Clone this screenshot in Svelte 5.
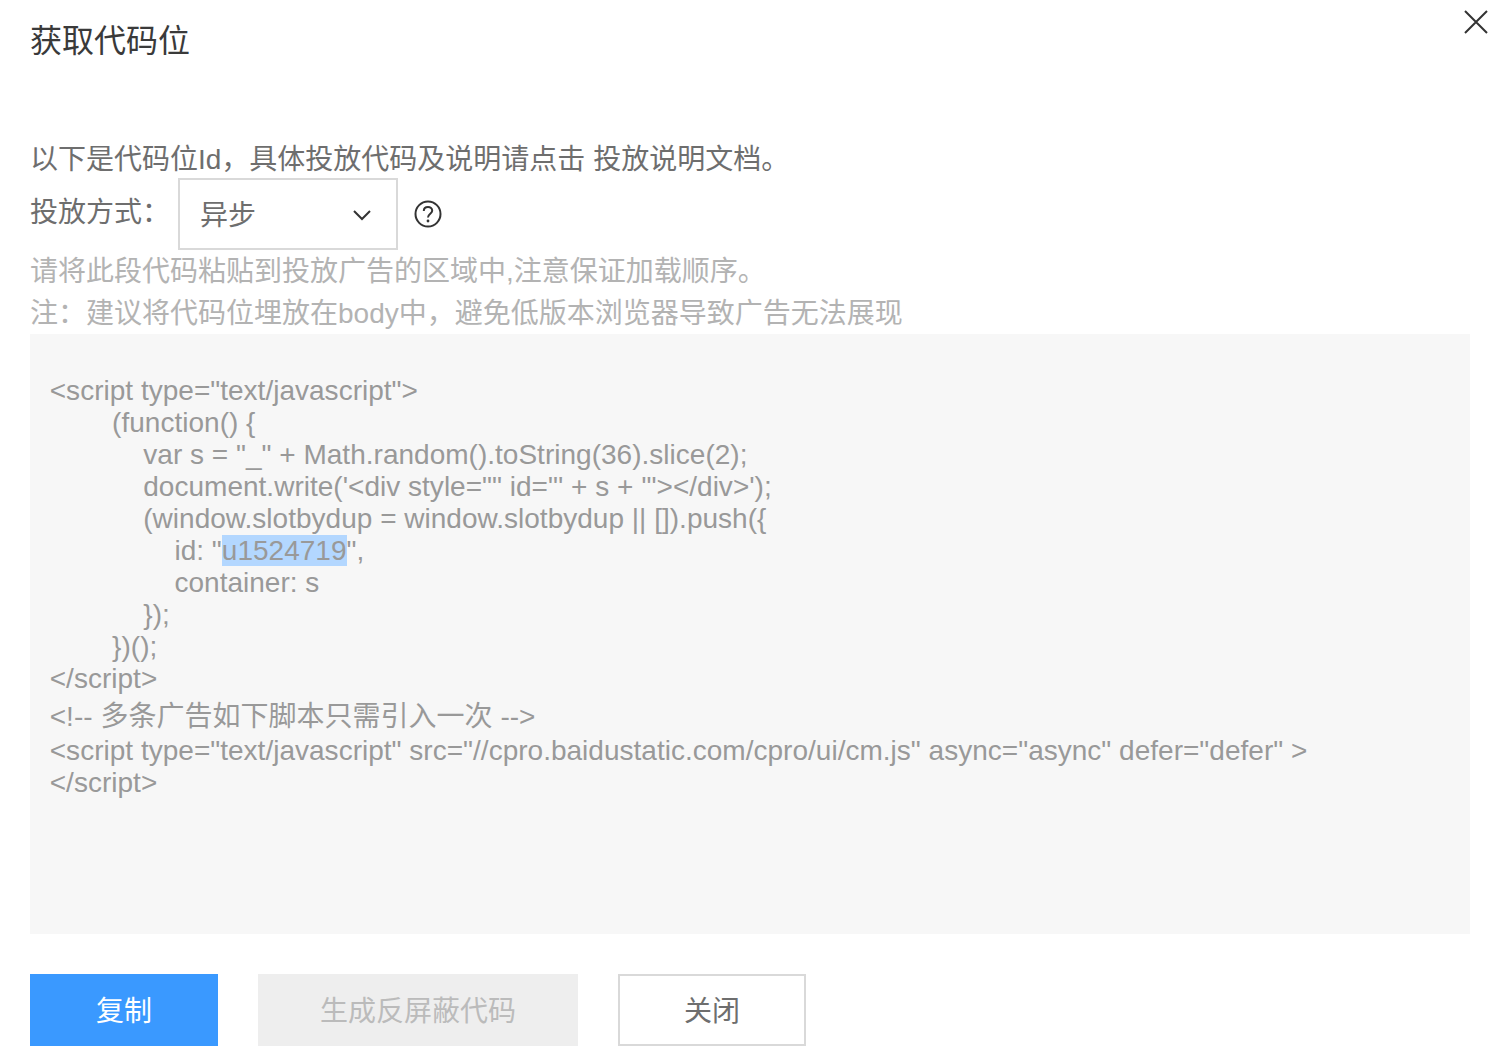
<script>
  const before = [
    { t: '<script type="text/javascript">' },
    { t: '        (function() {' },
    { t: '            var s = "_" + Math.random().toString(36).slice(2);' },
    { t: `            document.write('<div style="" id="' + s + '"></div>');` },
    { t: '            (window.slotbydup = window.slotbydup || []).push({' }
  ];
  const after = [
    { t: '                container: s' },
    { t: '            });' },
    { t: '        })();' },
    { t: '</' + 'script>' },
    { t: '<!-- 多条广告如下脚本只需引入一次 -->', cjk: true },
    { t: '<script type="text/javascript" src="//cpro.baidustatic.com/cpro/ui/cm.js" async="async" defer="defer" >' },
    { t: '</' + 'script>' }
  ];
  const idIndent = '                id: "';
</script>

<div class="dialog">
  <button class="close" aria-label="关闭">
    <svg width="26" height="26" viewBox="0 0 26 26"><path d="M2 2 L24 24 M24 2 L2 24" stroke="#333" stroke-width="2" fill="none" /></svg>
  </button>
  <h1>获取代码位</h1>
  <p class="intro">以下是代码位Id，具体投放代码及说明请点击 投放说明文档。</p>
  <div class="mode">
    <span class="label">投放方式：</span>
    <div class="select">
      <span class="value">异步</span>
      <svg width="20" height="12" viewBox="0 0 20 12"><path d="M2 2 L10 10 L18 2" stroke="#333" stroke-width="2" fill="none" /></svg>
    </div>
    <svg class="help" width="28" height="28" viewBox="0 0 28 28">
      <circle cx="14" cy="14" r="12.5" stroke="#333" stroke-width="2" fill="none" />
      <path d="M9.8 11 C9.8 8.4 11.8 7 14 7 C16.4 7 18.2 8.6 18.2 10.8 C18.2 13.6 14 14 14 17.4" stroke="#333" stroke-width="2" fill="none" />
      <circle cx="14" cy="21" r="1.4" fill="#333" />
    </svg>
  </div>
  <p class="hint">请将此段代码粘贴到投放广告的区域中,注意保证加载顺序。</p>
  <p class="hint">注：建议将代码位埋放在body中，避免低版本浏览器导致广告无法展现</p>
  <div class="code">
    {#each before as l}<div class="line">{l.t}</div>{/each}
    <div class="line">{idIndent}<span class="sel">u1524719</span>",</div>
    {#each after as l}<div class="line" class:cjk={l.cjk}>{l.t}</div>{/each}
  </div>
  <div class="actions">
    <button class="btn primary">复制</button>
    <button class="btn disabled wide">生成反屏蔽代码</button>
    <button class="btn plain">关闭</button>
  </div>
</div>

<style>
  :global(body) {
    margin: 0;
    background: #fff;
  }
  .dialog {
    position: relative;
    box-sizing: border-box;
    width: 1502px;
    height: 1062px;
    padding: 17px 32px 0 30px;
    font-family: "Liberation Sans", "Noto Sans CJK SC", sans-serif;
    color: #666;
    overflow: hidden;
  }
  .close {
    position: absolute;
    top: 9px;
    right: 13px;
    width: 26px;
    height: 26px;
    padding: 0;
    border: 0;
    background: none;
    display: block;
  }
  .close svg { display: block; }
  h1 {
    margin: 0;
    font-size: 32px;
    font-weight: 400;
    line-height: 48px;
    color: #3a3a3a;
  }
  .intro {
    margin: 77px 0 0;
    font-size: 28px;
    line-height: 36px;
    color: #6e6e6e;
  }
  .mode {
    display: flex;
    align-items: flex-start;
    font-size: 28px;
    height: 72px;
    color: #6e6e6e;
  }
  .label {
    width: 148px;
    line-height: 70px;
  }
  .select {
    box-sizing: border-box;
    width: 220px;
    height: 72px;
    border: 2px solid #d9d9d9;
    display: flex;
    align-items: center;
    justify-content: space-between;
    padding: 0 24px 0 20px;
  }
  .value { margin-bottom: 2px; }
  .select svg { margin-top: 2px; }
  .help {
    margin: 22px 0 0 16px;
  }
  .hint {
    margin: 0;
    padding-top: 2px;
    font-size: 28px;
    line-height: 40px;
    color: #b3b3b3;
  }
  .code {
    box-sizing: border-box;
    width: 1440px;
    height: 600px;
    padding: 41px 20px 0 19.75px;
    background: #f7f7f7;
    font-size: 28px;
    letter-spacing: 0.015px;
    color: #999;
  }
  .line {
    white-space: pre;
    line-height: 32px;
  }
  .line.cjk {
    line-height: 36px;
    padding-top: 4px;
  }
  .sel { background: #b3d7ff; }
  .actions {
    display: flex;
    gap: 40px;
    margin-top: 40px;
  }
  .btn {
    box-sizing: border-box;
    width: 188px;
    height: 72px;
    font-family: inherit;
    font-size: 28px;
    padding: 0 0 2px;
    border: 2px solid transparent;
    background: none;
  }
  .primary { background: #3a99ff; color: #fff; border-color: #3a99ff; }
  .disabled { background: #eee; color: #bbb; border-color: #eee; }
  .wide { width: 320px; }
  .plain { background: #fff; color: #6e6e6e; border-color: #d9d9d9; }
</style>
